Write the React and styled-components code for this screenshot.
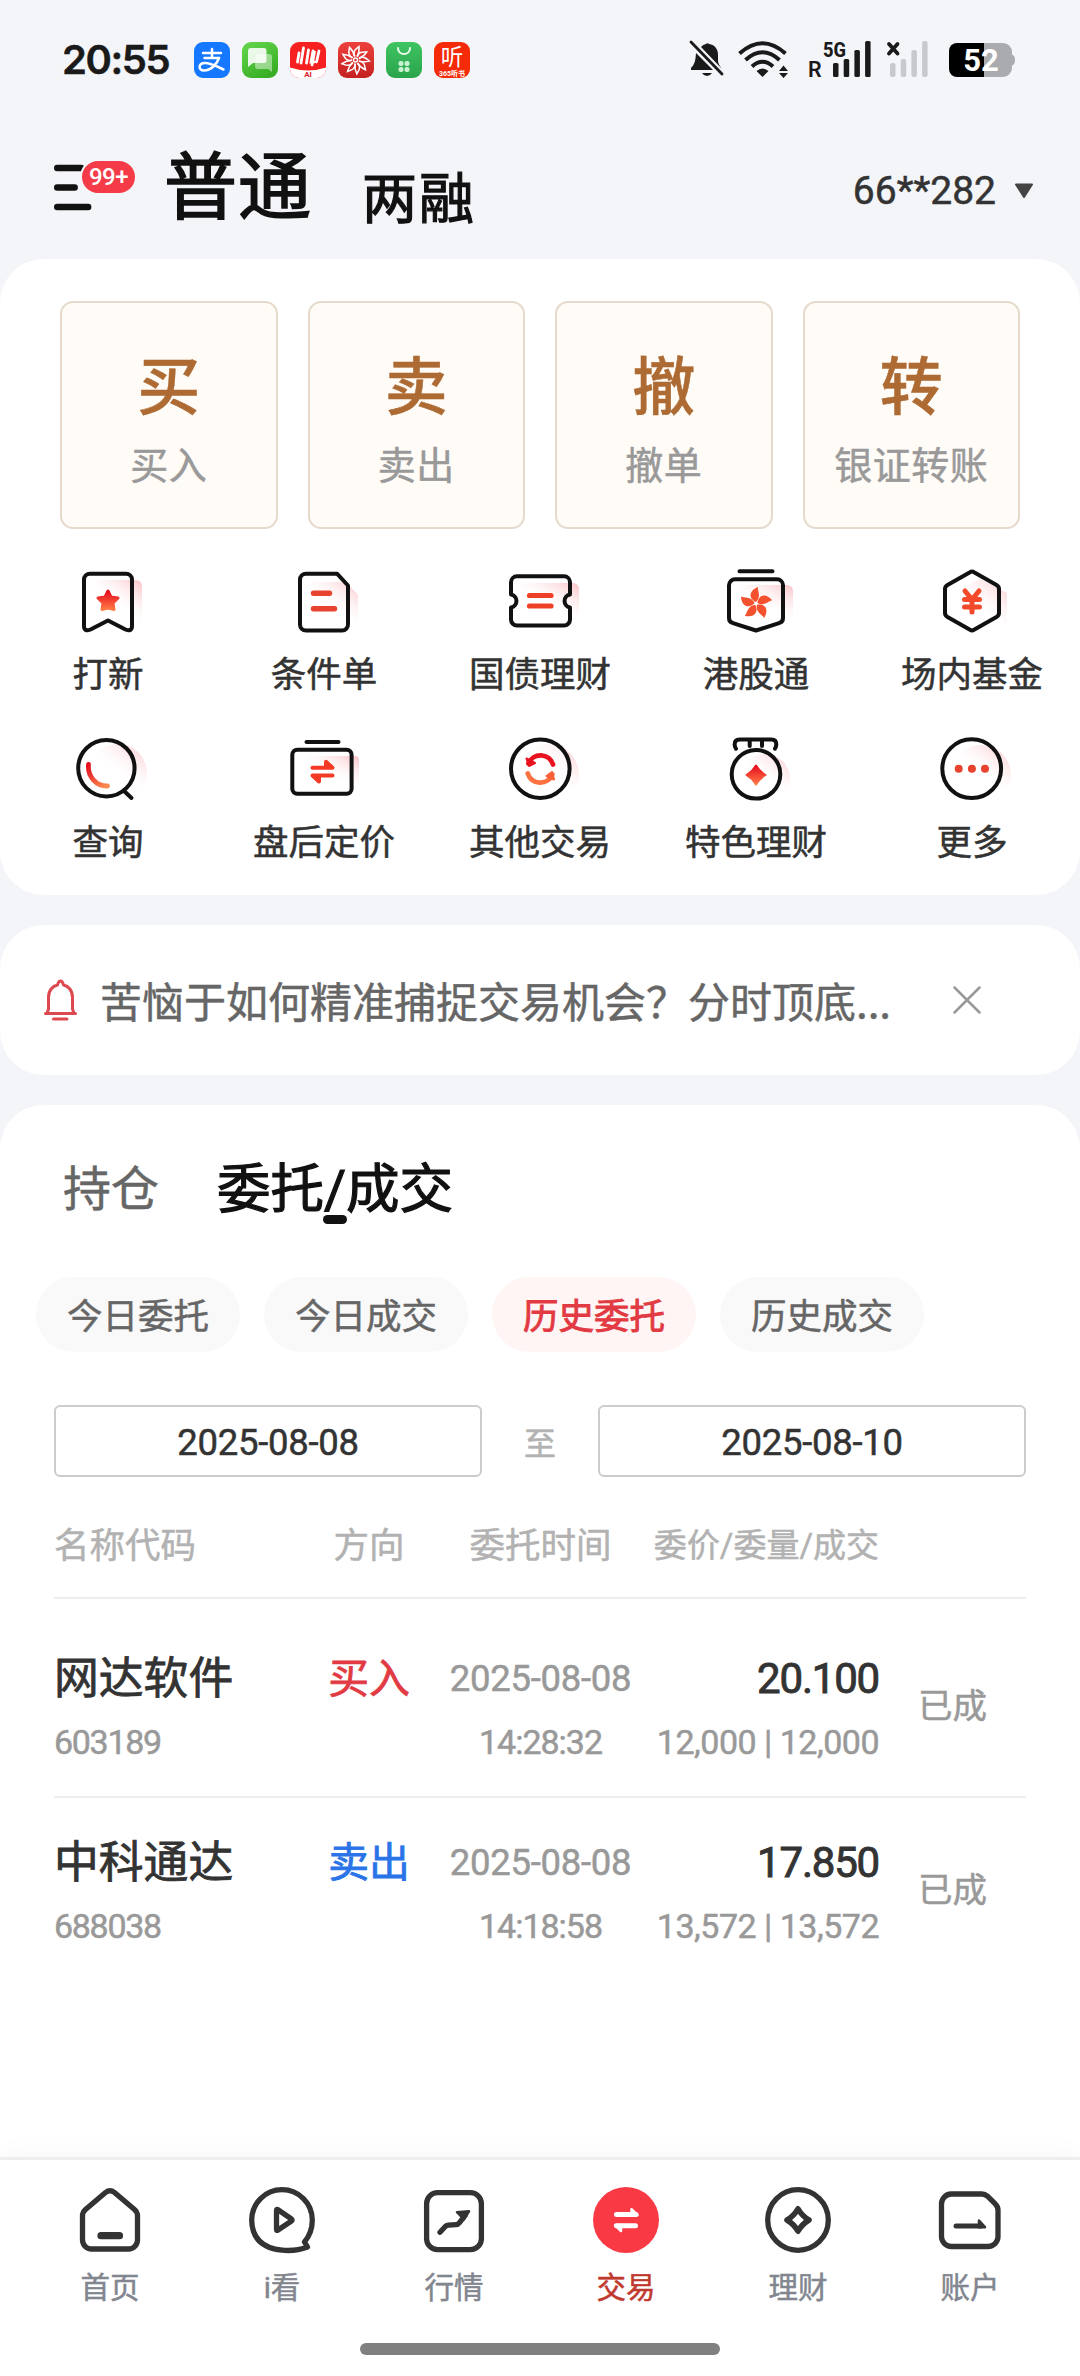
import {useState} from "react";
import styled, {createGlobalStyle, css} from "styled-components";

const GlobalStyle = createGlobalStyle`
    * {
        box-sizing: border-box;
        margin: 0;
        padding: 0;
    }

    body {
        background: #f4f5f9;
        font-family: Roboto, "Noto Sans CJK SC", sans-serif;
        color: #333;
        -webkit-text-stroke: 0.5px;
    }

    button {
        font: inherit;
        color: inherit;
        background: none;
        border: none;
    }

    svg {
        display: block;
        flex-shrink: 0;
    }

    svg text {
        -webkit-text-stroke: 0;
    }
`;

const Page = styled.div`
    width: 1080px;
    height: 2376px;
    display: flex;
    flex-direction: column;
    overflow: hidden;
    white-space: nowrap;
`;

/* ---------- status bar ---------- */

const StatusBar = styled.div`
    height: 120px;
    padding: 0 65px 0 62px;
    display: flex;
    align-items: center;
    flex-shrink: 0;
`;

const Clock = styled.div`
    width: 132px;
    font-family: Inter, sans-serif;
    font-size: 40px;
    font-weight: 600;
    letter-spacing: -1.4px;
    color: #1a1a1a;
    line-height: 48px;
    padding-bottom: 1px;
`;

const AppIcons = styled.div`
    display: flex;
    gap: 12px;
    margin-right: auto;
`;

const StatusIcons = styled.div`
    display: flex;
`;

/* ---------- header ---------- */

const Header = styled.header`
    height: 139px;
    padding: 0 46px 0 54px;
    display: flex;
    align-items: flex-start;
    flex-shrink: 0;
`;

const MenuButton = styled.button`
    position: relative;
    width: 110px;
    height: 50px;
    margin-top: 43px;
`;

const Badge = styled.span`
    position: absolute;
    left: 26px;
    top: -4px;
    width: 57px;
    height: 36px;
    border: 2px solid #f4f5f9;
    border-radius: 18px;
    background: #f53b47;
    color: #fff;
    font-size: 24px;
    font-weight: 500;
    line-height: 32px;
    text-align: center;
    letter-spacing: -0.5px;
    -webkit-text-stroke: 0;
`;

const HeaderTab = styled.button`
    font-size: ${(props) => (props.$active ? "73px" : "55px")};
    letter-spacing: ${(props) => (props.$active ? "1px" : "2px")};
    margin-right: ${(props) => (props.$active ? "50px" : "0")};
    margin-top: ${(props) => (props.$active ? "13px" : "24px")};
    line-height: 110px;
    height: 110px;
    -webkit-text-stroke: ${(props) => (props.$active ? "1.6px" : "1.2px")};
    color: #111;
`;

const Account = styled.button`
    margin-left: auto;
    margin-top: 47px;
    display: flex;
    align-items: center;
    gap: 18px;
    font-size: 39px;
    line-height: 48px;
`;

/* ---------- cards ---------- */

const Card = styled.section`
    background: #fff;
    border-radius: 44px;
    margin-bottom: 30px;
    flex-shrink: 0;
`;

const TradeCard = styled(Card)`
    height: 636px;
    padding-top: 42px;
`;

const MainActions = styled.div`
    display: grid;
    grid-template-columns: repeat(4, 1fr);
    gap: 30px;
    padding: 0 60px;
`;

const ActionButton = styled.button`
    height: 228px;
    border: 2px solid #e6dacd;
    border-radius: 13px;
    background: #fffbf7;
    display: flex;
    flex-direction: column;
    align-items: center;
`;

const ActionGlyph = styled.span`
    margin-top: 40px;
    font-size: 63px;
    line-height: 90px;
    font-weight: 500;
    color: #ad6b33;
`;

const ActionLabel = styled.span`
    margin-top: 5px;
    font-size: 38px;
    line-height: 56px;
    letter-spacing: 0.5px;
    color: #999;
`;

const Shortcuts = styled.div`
    display: grid;
    grid-template-columns: repeat(5, 216px);
    grid-auto-rows: 168px;
    margin-top: 33px;
`;

const Shortcut = styled.button`
    display: flex;
    flex-direction: column;
    align-items: center;
    font-size: 35.5px;
    line-height: 52px;

    svg {
        margin-bottom: 7px;
    }
`;

const Notice = styled(Card)`
    height: 150px;
    padding: 0 99px 0 44px;
    display: flex;
    align-items: center;
`;

const NoticeText = styled.p`
    margin-left: 23px;
    margin-right: auto;
    font-family: "Noto Sans CJK SC", sans-serif;
    font-size: 42px;
    line-height: 60px;
    color: #666;
`;

const OrdersCard = styled(Card)`
    flex: 1;
    margin-bottom: 0;
    border-radius: 44px 44px 0 0;
    padding-top: 44px;
`;

const Tabs = styled.div`
    display: flex;
    align-items: center;
    height: 80px;
    padding-left: 63px;
    gap: 58px;
`;

const Tab = styled.button`
    position: relative;
    font-size: 48px;
    line-height: 83px;
    color: #666;

    ${(props) => props.$active && css`
        font-size: 53.5px;
        -webkit-text-stroke: 1.2px;
        color: #111;

        &::after {
            content: "";
            position: absolute;
            left: 50%;
            bottom: 7px;
            width: 24px;
            height: 9px;
            margin-left: -12px;
            border-radius: 4.5px;
            background: #111;
        }
    `}
`;

const Pills = styled.div`
    display: flex;
    gap: 24px;
    padding-left: 36px;
    margin-top: 48px;
`;

const Pill = styled.button`
    width: 204px;
    height: 75px;
    padding-bottom: 2px;
    border-radius: 38px;
    font-size: 35.5px;
    background: ${(props) => (props.$active ? "#fff5f4" : "#f9f9f9")};
    color: ${(props) => (props.$active ? "#e23a43" : "#666")};
    -webkit-text-stroke: ${(props) => (props.$active ? "0.9px" : "0.5px")};
`;

const DateRange = styled.div`
    display: grid;
    grid-template-columns: 428px 1fr 428px;
    align-items: center;
    padding: 0 54px;
    margin-top: 53px;
    text-align: center;
    font-size: 32px;
    color: #b2b2b2;
`;

const DateInput = styled.button`
    height: 72px;
    border: 2px solid #ccc;
    border-radius: 6px;
    font-size: 36.5px;
    letter-spacing: -0.3px;
    color: #333;
    padding-top: 2px;
`;

const Table = styled.div`
    margin: 0 54px;
`;

const columns = css`
    display: grid;
    grid-template-columns: 240px 150px 193px 242px 147px;
`;

const TableHead = styled.div`
    ${columns};
    height: 122px;
    padding-top: 41px;
    border-bottom: 2px solid #eee;
    font-size: 35.5px;
    line-height: 56px;
    color: #b2b2b2;
`;

const HeadCell = styled.div`
    text-align: ${(props) => props.$align || "left"};
    font-size: ${(props) => props.$size || "inherit"};
`;

const TableRow = styled.div`
    ${columns};
    height: ${(props) => (props.$first ? "199px" : "184px")};
    padding-top: ${(props) => (props.$first ? "46px" : "31px")};
    border-bottom: ${(props) => (props.$last ? "none" : "2px solid #eee")};
`;

const Cell = styled.div`
    display: flex;
    flex-direction: column;
    align-items: ${(props) => props.$align || "flex-start"};
    color: #999;
`;

const Primary = styled.span`
    height: 68px;
    line-height: 68px;
    font-size: ${(props) => props.$size}px;
    -webkit-text-stroke: ${(props) => props.$stroke || 0.5}px;
    letter-spacing: ${(props) => props.$spacing || 0}px;
    color: ${(props) => props.$color || "#999"};
`;

const Secondary = styled.span`
    height: 58px;
    line-height: 58px;
    font-size: 34px;
    letter-spacing: ${(props) => props.$spacing || -1}px;
`;

const Status = styled.div`
    font-size: 34.5px;
    line-height: 122px;
    color: #999;
    text-align: center;
`;

/* ---------- bottom navigation ---------- */

const BottomNav = styled.nav`
    height: 219px;
    flex-shrink: 0;
    background: #fff;
    border-top: 3px solid #eee;
    box-shadow: 0 -4px 24px rgba(0, 0, 0, 0.03);
    display: flex;
    flex-direction: column;
    align-items: center;
`;

const NavItems = styled.div`
    display: grid;
    grid-template-columns: repeat(6, 172px);
    padding-top: 24px;
    height: 183px;
`;

const NavItem = styled.button`
    display: flex;
    flex-direction: column;
    align-items: center;
    font-size: 29.5px;
    line-height: 44px;
    color: ${(props) => (props.$active ? "#c0392f" : "#82868f")};

    svg {
        margin-bottom: 10px;
    }
`;

const HomeIndicator = styled.div`
    width: 360px;
    height: 12px;
    border-radius: 6px;
    background: #808080;
`;

/* ---------- icons ---------- */

const Defs = () => (
    <svg width="0" height="0" style={{position: "absolute"}}>
        <defs>
            <linearGradient id="hot" x1="0" y1="0" x2="0" y2="1">
                <stop offset="0" stopColor="#e60a1e"/>
                <stop offset="1" stopColor="#ff7a45"/>
            </linearGradient>
            <linearGradient id="shade" x1="1" y1="0" x2="0.55" y2="0.6">
                <stop offset="0" stopColor="#fac0c4"/>
                <stop offset="1" stopColor="#fff" stopOpacity="0"/>
            </linearGradient>
            <linearGradient id="arc" gradientUnits="userSpaceOnUse" x1="20" y1="34" x2="38" y2="56">
                <stop offset="0" stopColor="#e60a1e"/>
                <stop offset="1" stopColor="#fb8a50"/>
            </linearGradient>
            <linearGradient id="green" x1="0" y1="0" x2="0.6" y2="1">
                <stop offset="0" stopColor="#66d84f"/>
                <stop offset="1" stopColor="#38ae25"/>
            </linearGradient>
            <linearGradient id="leaf" x1="0" y1="0" x2="0" y2="1">
                <stop offset="0" stopColor="#3fc463"/>
                <stop offset="1" stopColor="#2aa44b"/>
            </linearGradient>
            <linearGradient id="crimson" x1="0" y1="0" x2="0" y2="1">
                <stop offset="0" stopColor="#ee403c"/>
                <stop offset="1" stopColor="#c3211f"/>
            </linearGradient>
        </defs>
    </svg>
);

const AppIcon = ({fill, children}) => (
    <svg width="36" height="36" viewBox="0 0 36 36">
        <rect width="36" height="36" rx="9" fill={fill}/>
        {children}
    </svg>
);

const AppIconRow = () => (
    <AppIcons>
        <AppIcon fill="#1677ff">
            <g fill="none" stroke="#fff" strokeWidth="2.5" strokeLinecap="round">
                <path d="M9 11h18M18 7v8.500M10.500 16H25"/>
                <path d="M25 16c-2 6-8 12.500-15 12.500-6 0-6-7.500 1-7.500 7 0 11 3.500 18.500 6.500"/>
            </g>
        </AppIcon>
        <AppIcon fill="url(#green)">
            <path d="M14 12h13a3 3 0 0 1 3 3v15l-4-3H16a3 3 0 0 1-3-3z" fill="#fff" opacity="0.45"/>
            <path d="M9 6h13a2.500 2.500 0 0 1 2.500 2.500v10A2.500 2.500 0 0 1 22 21H11l-5 4V9a3 3 0 0 1 3-3z" fill="#fff" opacity="0.88"/>
        </AppIcon>
        <AppIcon fill="#f5201f">
            <path d="M0 25.500q18 6 36 0V27a9 9 0 0 1-9 9H9a9 9 0 0 1-9-9z" fill="#fff"/>
            <g fill="none" stroke="#fff" strokeWidth="2.800" strokeLinecap="round">
                <path d="M9 11l-1.500 9M13.500 6l-2.500 15M18.500 8l-2 13M23 9l-2 11h3M29 9l-2.500 11M24.500 10L22 23"/>
            </g>
            <text x="18" y="35" fontSize="8" fontWeight="700" fill="#d8222a" textAnchor="middle">AI</text>
        </AppIcon>
        <AppIcon fill="url(#crimson)">
            <g fill="none" stroke="#fff" strokeWidth="1.500">
                {[0, 40, 80, 120, 160, 200, 240, 280, 320].map((deg) => (
                    <path key={deg} d="M17 14.500C14 9.500 18 7 21 4.500 21.500 9 20.500 12 19 14.500" transform={`rotate(${deg} 17.500 18)`}/>
                ))}
                <circle cx="17.500" cy="18" r="2"/>
            </g>
        </AppIcon>
        <AppIcon fill="url(#leaf)">
            <path d="M12 6c0 8 12 8 12 0" fill="none" stroke="#e6fbe9" strokeWidth="2" strokeLinecap="round"/>
            <g fill="#c9f2d2">
                <rect x="12.500" y="19" width="5" height="5" rx="2"/>
                <rect x="18.500" y="19" width="5" height="5" rx="2"/>
                <rect x="12.500" y="25" width="5" height="5" rx="2"/>
                <rect x="18.500" y="25" width="5" height="5" rx="2"/>
            </g>
        </AppIcon>
        <AppIcon fill="#f42a08">
            <text x="18" y="22.500" fontSize="22.500" fill="#fff" textAnchor="middle">听</text>
            <text x="18" y="33.500" fontSize="7" fontWeight="700" fill="#fff" textAnchor="middle">365听书</text>
        </AppIcon>
    </AppIcons>
);

const bars = [
    {x: 0, y: 23},
    {x: 10.7, y: 19},
    {x: 21.4, y: 10},
    {x: 32.1, y: 1},
];

const SystemIcons = () => (
    <StatusIcons>
        {/* muted bell */}
        <svg width="50" height="40" viewBox="0 0 50 40" fill="#1a1a1a">
            <path d="M18 4a2 2 0 0 1 3 0c6 1 9 5 9 11v6c0 3 2 5 4 8L13 7q2-2.500 5-3z"/>
            <path d="M8 13L25 30H3v-2c3-3 4.500-6 5-15zM14 33h10q-2 3-5 3t-5-3z"/>
            <path d="M3 2l31 32" stroke="#1a1a1a" strokeWidth="2.800" strokeLinecap="round"/>
        </svg>
        {/* wifi with traffic arrows */}
        <svg width="70" height="40" viewBox="0 0 70 40">
            <g fill="none" stroke="#1a1a1a" strokeWidth="4">
                <path d="M1.500 13.500Q24.500-7 47.500 13.500M7.500 20Q24.500 4.500 41.500 20M14 26.500Q24.500 17 35 26.500"/>
            </g>
            <path d="M18.500 31q6-5 12 0l-6 6zM41 31l4.500-5.500L50 31zM41 33h9l-4.500 5z" fill="#1a1a1a"/>
        </svg>
        {/* sim 1 */}
        <svg width="81" height="40" viewBox="0 0 81 40" fill="#1a1a1a" overflow="visible">
            <text x="0" y="37" fontSize="21.500" fontWeight="600">R</text>
            <text x="15" y="16.500" fontSize="21" fontWeight="800" textLength="23" lengthAdjust="spacingAndGlyphs">5G</text>
            {bars.map((bar) => (
                <rect key={bar.x} x={bar.x + 25} y={bar.y} width="5.500" height={37 - bar.y} rx="1.500"/>
            ))}
        </svg>
        {/* sim 2, no service */}
        <svg width="60" height="40" viewBox="0 0 60 40" overflow="visible">
            <path d="M0 4l8.500 9.500M8.500 4L0 13.500" stroke="#1a1a1a" strokeWidth="3.800" strokeLinecap="round"/>
            {bars.map((bar) => (
                <rect key={bar.x} x={bar.x + 1} y={bar.y} width="5.500" height={37 - bar.y} rx="2" fill="#c8c9cc"/>
            ))}
        </svg>
        <svg width="66" height="40" viewBox="0 0 66 40">
            <path d="M35 3h19a9 9 0 0 1 9 9v2.500q3 1 3 5.500t-3 5.500V28a9 9 0 0 1-9 9H35z" fill="#aaabae"/>
            <path d="M35 3H8a8 8 0 0 0-8 8v18a8 8 0 0 0 8 8h27z" fill="#000"/>
            <text x="32" y="31" fontSize="31" fontWeight="700" fill="#fff" textAnchor="middle">52</text>
        </svg>
    </StatusIcons>
);

const ShortcutIcon = ({children}) => (
    <svg width="80" height="80" viewBox="0 0 80 80" fill="none" stroke="#111" strokeWidth="4"
         strokeLinejoin="round" strokeLinecap="round">
        {children}
    </svg>
);

const IpoIcon = () => (
    <ShortcutIcon>
        <rect x="24" y="18" width="50" height="52" rx="6" fill="url(#shade)" stroke="none"/>
        <path d="M22 11.700h36a6 6 0 0 1 6 6V64q0 6-6.500 3.500L40 58.500 22.500 67.500Q16 70 16 64V17.700a6 6 0 0 1 6-6z"/>
        <path d="M40 29l3 6 7 1-5 5 1 6.500-6-1.500-6 1.500 1-6.500-5-5 7-1z" fill="url(#hot)" stroke="url(#hot)" strokeWidth="3"/>
    </ShortcutIcon>
);

const ConditionIcon = () => (
    <ShortcutIcon>
        <path d="M24 20h38l12 13v40H24z" fill="url(#shade)" stroke="none"/>
        <path d="M22 11.700h31L64 23.500V62a6 6 0 0 1-6 6.500H22a6 6 0 0 1-6-6V17.700a6 6 0 0 1 6-6z"/>
        <path d="M29.500 31.200h16M29.500 46.700h21" stroke="#e8432e" strokeWidth="5.400"/>
    </ShortcutIcon>
);

const BondIcon = () => (
    <ShortcutIcon>
        <rect x="17" y="21" width="62" height="46" rx="6" fill="url(#shade)" stroke="none"/>
        <path d="M17 14.300h47a6 6 0 0 1 6 6V32.500a6.600 6.600 0 0 0 0 13V57.500a6 6 0 0 1-6 6H17a6 6 0 0 1-6-6V45.500a6.600 6.600 0 0 0 0-13V20.300a6 6 0 0 1 6-6z"/>
        <path d="M29.500 33.500h21.500M29.500 44h21.500" stroke="#ee4027" strokeWidth="5.200"/>
    </ShortcutIcon>
);

const HkIcon = () => (
    <ShortcutIcon>
        <rect x="19" y="23" width="58" height="44" rx="6" fill="url(#shade)" stroke="none"/>
        <path d="M23.500 9.300h33M19 17.300h42a6 6 0 0 1 6 6V56q0 4-4 5.200L40 68.500 17 61.200Q13 60 13 56V23.300a6 6 0 0 1 6-6z"/>
        <g fill="#f4512f" stroke="none">
            {[0, 72, 144, 216, 288].map((deg) => (
                <path key={deg} d="M40 40C33 37 32 29 42 25 41 28.500 46 34 40 40z" transform={`rotate(${deg} 40 41.500)`}/>
            ))}
        </g>
    </ShortcutIcon>
);

const FundIcon = () => (
    <ShortcutIcon>
        <path d="M48 17l27 14v35L48 78 21 66V31z" fill="url(#shade)" stroke="none"/>
        <path d="M38 10.200q2-1.200 4 0l22.500 12.800q2.500 1.500 2.500 4V51q0 2.500-2.500 4L42 67.800q-2 1.200-4 0L15.500 55Q13 53.500 13 51V27q0-2.500 2.500-4z"/>
        <path d="M33 29l7 8.500L47 29M32.500 37.500h15M32.500 45h15M40 37.500V50" stroke="#f34a2c" strokeWidth="5"/>
    </ShortcutIcon>
);

const QueryIcon = () => (
    <ShortcutIcon>
        <circle cx="50" cy="43" r="29" fill="url(#shade)" stroke="none"/>
        <circle cx="38.400" cy="38.200" r="28.200"/>
        <path d="M55.500 60.500l8 7.500"/>
        <path d="M20.500 34.500a18.500 19.500 0 0 0 19 21.500" stroke="url(#arc)" strokeWidth="4.800"/>
    </ShortcutIcon>
);

const AfterHoursIcon = () => (
    <ShortcutIcon>
        <rect x="20" y="26" width="55" height="40" rx="4" fill="url(#shade)" stroke="none"/>
        <path d="M22.500 12h32"/>
        <rect x="8.300" y="19.800" width="59.300" height="44" rx="5"/>
        <path d="M28.500 37.800h20l-6.500-6v6M48.500 45.500h-20l6.500 6v-6" stroke="#f23a25" strokeWidth="4"/>
    </ShortcutIcon>
);

const OtherTradeIcon = () => (
    <ShortcutIcon>
        <circle cx="48" cy="45" r="31" fill="url(#shade)" stroke="none"/>
        <circle cx="40.300" cy="38.700" r="29.300" fill="#fff" fillOpacity="0.6"/>
        <path d="M53 34.500a13 13 0 0 0-24.500-1" stroke="#e8131f" strokeWidth="4.800"/>
        <path d="M26.500 28.500l2.500 7.500 6-3z" fill="#e8131f" stroke="#e8131f" strokeWidth="2"/>
        <path d="M27.800 43.500a13 13 0 0 0 24.500 1" stroke="#fb7140" strokeWidth="4.800"/>
        <path d="M54 49.500L52 42l-5.500 4z" fill="#fb6038" stroke="#fb6038" strokeWidth="2"/>
    </ShortcutIcon>
);

const FeatureIcon = () => (
    <ShortcutIcon>
        <circle cx="49" cy="49" r="25" fill="url(#shade)" stroke="none"/>
        <path d="M20 18.700q-1.500-2-1.300-4.500 0-4.700 4.800-4.700h32q4.800 0 4.800 4.700 0 2.500-1.300 4.500M33.700 10v6M46 10v6"/>
        <circle cx="40" cy="44.300" r="24.300"/>
        <path d="M40 35.500q3.500 6 9.500 9.500-6 3.500-9.500 9.500-3.500-6-9.500-9.500 6-3.500 9.500-9.500z" fill="url(#hot)" stroke="url(#hot)" strokeWidth="2"/>
    </ShortcutIcon>
);

const MoreIcon = () => (
    <ShortcutIcon>
        <circle cx="49" cy="45" r="30" fill="url(#shade)" stroke="none"/>
        <circle cx="39.700" cy="38.700" r="29.400"/>
        <g fill="#e8432e" stroke="none">
            <circle cx="26.700" cy="38.700" r="4"/>
            <circle cx="39.900" cy="38.700" r="4"/>
            <circle cx="53" cy="38.700" r="4"/>
        </g>
    </ShortcutIcon>
);

const NavIcon = ({children}) => (
    <svg width="72" height="72" viewBox="0 0 72 72" fill="none" stroke="#333" strokeWidth="5.300"
         strokeLinejoin="round" strokeLinecap="round">
        {children}
    </svg>
);

const HomeIcon = () => (
    <NavIcon>
        <path d="M31.500 8.500q4.500-3.500 9 0L60.500 25.500q3 2.600 3 6.500V56a9 9 0 0 1-9 9h-37a9 9 0 0 1-9-9V32q0-3.900 3-6.500z"/>
        <path d="M27 51.700h18.500" strokeWidth="7.200"/>
    </NavIcon>
);

const WatchIcon = () => (
    <NavIcon>
        <path d="M58.500 58Q66.300 48.500 66.300 36A30.300 30.300 0 0 0 5.700 36Q6 63 36 66.200 50 67.500 61.500 63z"/>
        <path d="M30.500 26.500v19q0 1.500 1.500.500L45.500 37q1.200-1 0-2L32 25.800q-1.500-1-1.500.700z"/>
    </NavIcon>
);

const MarketIcon = () => (
    <NavIcon>
        <rect x="8.600" y="8.700" width="54.800" height="57" rx="11"/>
        <path d="M22 48.300l5.500-6q1-1 3-1.100l7.500-.500q2 0 3.500-2L47 31.500"/>
        <path d="M39 28.200l12-.9-5 8z" fill="#333" strokeWidth="2.500"/>
    </NavIcon>
);

const TradeIcon = () => (
    <NavIcon>
        <circle cx="36" cy="36" r="33" fill="#f93944" stroke="none"/>
        <path d="M26.500 30.500H46M45.500 41.800H26.500" stroke="#fff" strokeWidth="5"/>
        <path d="M41.500 25.200l6 6h-6zM31 47l-6-6h6z" fill="#fff" stroke="#fff" strokeWidth="2.500"/>
    </NavIcon>
);

const WealthIcon = () => (
    <NavIcon>
        <circle cx="36" cy="36" r="30.300"/>
        <path d="M36 24.800q4.200 7.200 11 11.200-6.800 4-11 11.200-4.200-7.200-11-11.200 6.800-4 11-11.200z" strokeWidth="5.600"/>
    </NavIcon>
);

const ProfileIcon = () => (
    <NavIcon>
        <path d="M17 10h31q3 0 5.500 2.200l8 8q2.500 2.300 2.500 6V52.500a10 10 0 0 1-10 10H17.500a10 10 0 0 1-10-10V20a10 10 0 0 1 9.500-10z"/>
        <path d="M22 42h25" strokeWidth="5"/>
        <path d="M45 36.500l6 6.700h-6z" fill="#333" strokeWidth="2.500"/>
    </NavIcon>
);

/* ---------- data ---------- */

const actions = [
    {glyph: "买", label: "买入"},
    {glyph: "卖", label: "卖出"},
    {glyph: "撤", label: "撤单"},
    {glyph: "转", label: "银证转账"},
];

const shortcuts = [
    {label: "打新", Icon: IpoIcon},
    {label: "条件单", Icon: ConditionIcon},
    {label: "国债理财", Icon: BondIcon},
    {label: "港股通", Icon: HkIcon},
    {label: "场内基金", Icon: FundIcon},
    {label: "查询", Icon: QueryIcon},
    {label: "盘后定价", Icon: AfterHoursIcon},
    {label: "其他交易", Icon: OtherTradeIcon},
    {label: "特色理财", Icon: FeatureIcon},
    {label: "更多", Icon: MoreIcon},
];

const filters = ["今日委托", "今日成交", "历史委托", "历史成交"];

const orders = [
    {
        name: "网达软件",
        code: "603189",
        side: "买入",
        date: "2025-08-08",
        time: "14:28:32",
        price: "20.100",
        volume: "12,000 | 12,000",
        status: "已成",
    },
    {
        name: "中科通达",
        code: "688038",
        side: "卖出",
        date: "2025-08-08",
        time: "14:18:58",
        price: "17.850",
        volume: "13,572 | 13,572",
        status: "已成",
    },
];

const navItems = [
    {label: "首页", Icon: HomeIcon},
    {label: "i看", Icon: WatchIcon},
    {label: "行情", Icon: MarketIcon},
    {label: "交易", Icon: TradeIcon},
    {label: "理财", Icon: WealthIcon},
    {label: "账户", Icon: ProfileIcon},
];

const OrderRow = ({order, first, last}) => {
    const {name, code, side, date, time, price, volume, status} = order;

    return (
        <TableRow $first={first} $last={last}>
            <Cell>
                <Primary $size={44.8} $color="#333" $stroke={0.8}>{name}</Primary>
                <Secondary $spacing={-1.3}>{code}</Secondary>
            </Cell>
            <Cell $align="center">
                <Primary $size={40.8} $stroke={0.8} $color={side === "买入" ? "#e23a43" : "#2a74e8"}>{side}</Primary>
            </Cell>
            <Cell $align="center">
                <Primary $size={36.5} $spacing={-0.3}>{date}</Primary>
                <Secondary>{time}</Secondary>
            </Cell>
            <Cell $align="flex-end">
                <Primary $size={42} $color="#333" $stroke={0.9} $spacing={-1.2}>{price}</Primary>
                <Secondary $spacing={-0.5}>{volume}</Secondary>
            </Cell>
            <Status>{status}</Status>
        </TableRow>
    );
};

const App = () => {
    const [filter, setFilter] = useState("历史委托");
    const [page, setPage] = useState("交易");

    return (
        <Page>
            <GlobalStyle/>
            <Defs/>
            <StatusBar>
                <Clock>20:55</Clock>
                <AppIconRow/>
                <SystemIcons/>
            </StatusBar>

            <Header>
                <MenuButton>
                    <svg width="40" height="50" viewBox="0 0 40 50" stroke="#111" strokeWidth="6.400" strokeLinecap="round">
                        <path d="M3.200 5h24M3.200 24.500h17.500M3.200 44h31"/>
                    </svg>
                    <Badge>99+</Badge>
                </MenuButton>
                <HeaderTab $active>普通</HeaderTab>
                <HeaderTab>两融</HeaderTab>
                <Account>
                    66**282
                    <svg width="20" height="16" viewBox="0 0 20 16">
                        <path d="M2 1.500h16L10 14z" fill="#444" stroke="#444" strokeWidth="2" strokeLinejoin="round"/>
                    </svg>
                </Account>
            </Header>

            <TradeCard>
                <MainActions>
                    {actions.map(({glyph, label}) => (
                        <ActionButton key={label}>
                            <ActionGlyph>{glyph}</ActionGlyph>
                            <ActionLabel>{label}</ActionLabel>
                        </ActionButton>
                    ))}
                </MainActions>
                <Shortcuts>
                    {shortcuts.map(({label, Icon}) => (
                        <Shortcut key={label}>
                            <Icon/>
                            {label}
                        </Shortcut>
                    ))}
                </Shortcuts>
            </TradeCard>

            <Notice>
                <svg width="33" height="42" viewBox="0 0 33 42" fill="none" stroke="#dc4a50" strokeWidth="3"
                     strokeLinejoin="round" strokeLinecap="round">
                    <path d="M3 34.500l1.500-4.500V18.500c0-7 4-11.500 9-12.500q1-4 3-4t3 4c5 1 9 5.500 9 12.500V30l1.500 4.500z"/>
                    <path d="M1.500 34.500h30M9.500 40h13.500" strokeWidth="3"/>
                </svg>
                <NoticeText>苦恼于如何精准捕捉交易机会？分时顶底...</NoticeText>
                <svg width="28" height="28" viewBox="0 0 28 28" stroke="#999" strokeWidth="2.500" strokeLinecap="round">
                    <path d="M1.500 1.500l25 25M26.500 1.500l-25 25"/>
                </svg>
            </Notice>

            <OrdersCard>
                <Tabs>
                    <Tab>持仓</Tab>
                    <Tab $active>委托/成交</Tab>
                </Tabs>
                <Pills>
                    {filters.map((item) => (
                        <Pill key={item} $active={item === filter} onClick={() => setFilter(item)}>{item}</Pill>
                    ))}
                </Pills>
                <DateRange>
                    <DateInput>2025-08-08</DateInput>
                    至
                    <DateInput>2025-08-10</DateInput>
                </DateRange>
                <Table>
                    <TableHead>
                        <HeadCell>名称代码</HeadCell>
                        <HeadCell $align="center">方向</HeadCell>
                        <HeadCell $align="center">委托时间</HeadCell>
                        <HeadCell $align="right" $size="33px">委价/委量/成交</HeadCell>
                    </TableHead>
                    {orders.map((order, index) => (
                        <OrderRow
                            key={order.code}
                            order={order}
                            first={index === 0}
                            last={index === orders.length - 1}
                        />
                    ))}
                </Table>
            </OrdersCard>

            <BottomNav>
                <NavItems>
                    {navItems.map(({label, Icon}) => (
                        <NavItem key={label} $active={label === page} onClick={() => setPage(label)}>
                            <Icon/>
                            {label}
                        </NavItem>
                    ))}
                </NavItems>
                <HomeIndicator/>
            </BottomNav>
        </Page>
    );
};

export default App
